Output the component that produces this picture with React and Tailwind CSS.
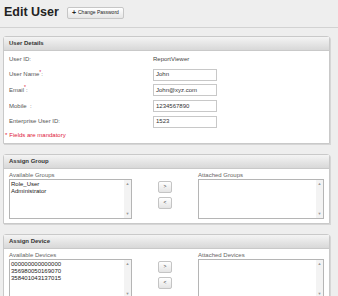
import React from 'react';

const users = [
  { label: 'User Name', req: true, value: 'John' },
  { label: 'Email', req: true, value: 'John@xyz.com' },
  { label: 'Mobile :', req: false, value: '1234567890' },
  { label: 'Enterprise User ID:', req: false, value: '1523' },
];

function Panel({ title, children, className = '' }) {
  return (
    <div className={`mx-[3px] w-[327px] rounded-t-[3px] border border-[#c9c9c9] bg-white shadow-[1px_1px_0_#d6d6d6] ${className}`}>
      <div className="flex h-[14px] items-center border-b border-[#c9c9c9] bg-gradient-to-b from-[#f4f4f4] to-[#d8d8d8] px-[5px] text-[6px] font-bold text-[#333]">
        {title}
      </div>
      {children}
    </div>
  );
}

function ListBox({ items }) {
  return (
    <div className="flex h-[40px] w-full shrink-0 border border-[#b5b5b5] bg-white">
      <div className="flex-1 px-[1px] pt-[1px] text-[6px] leading-[7px] text-[#222]">
        {items.map(i => <div key={i}>{i}</div>)}
      </div>
      <div className="flex w-[7px] flex-col items-center justify-between bg-[#f3f3f3] py-[2px] text-[4px] leading-[4px] text-[#999]">
        <span>▲</span>
        <span>▼</span>
      </div>
    </div>
  );
}

function MoveButton({ children }) {
  return (
    <div className="flex h-[12px] w-[14px] items-center justify-center rounded-[2px] border border-[#c4c4c4] bg-gradient-to-b from-white to-[#e4e4e4] text-[5px] text-[#333]">
      {children}
    </div>
  );
}

function Picker({ left, right, items }) {
  return (
    <div className="flex px-[5px] pt-[2px] pb-[4px]">
      <div className="flex w-[123px] flex-col">
        <div className="h-[8px] text-[6px] leading-[8px] text-[#666]">{left}</div>
        <ListBox items={items} />
      </div>
      <div className="flex w-[66px] flex-col items-center gap-[4px] pt-[10px]">
        <MoveButton>&gt;</MoveButton>
        <MoveButton>&lt;</MoveButton>
      </div>
      <div className="flex w-[126px] flex-col">
        <div className="h-[8px] text-[6px] leading-[8px] text-[#666]">{right}</div>
        <ListBox items={[]} />
      </div>
    </div>
  );
}

export default function App() {
  return (
    <div className="h-[296px] w-[338px] overflow-hidden bg-[#eeeeee] font-['Liberation_Sans',Arial,sans-serif]">
      <div className="flex h-[28px] items-center gap-[8px] border-b border-[#d2d2d2] px-[4px] pb-[2px]">
        <h1 className="text-[12.5px] font-bold text-[#222]">Edit User</h1>
        <button className="flex h-[12px] items-center gap-[2px] rounded-[2px] border border-[#c6c6c6] bg-gradient-to-b from-white to-[#e6e6e6] px-[4px] text-[5px] text-[#222]">
          <span className="text-[7px] font-bold leading-none">+</span>
          Change Password
        </button>
      </div>

      <Panel title="User Details" className="mt-[8px]">
        <div className="px-[5px] pt-[3px] text-[6px] text-[#555]">
          <div className="flex h-[11px] items-center">
            <span className="w-[144px]">User ID:</span>
            <span className="text-[#444]">ReportViewer</span>
          </div>
          {users.map(u => (
            <div key={u.label} className="mt-[3.7px] flex h-[12px] items-center">
              <span className="w-[144px] whitespace-pre">
                {u.label.replace(' :', '')}
                {u.req && <sup className="text-[5px] text-[#e0203a]">*</sup>}
                {u.req ? ':' : u.label.endsWith(' :') ? '  :' : ''}
              </span>
              <div className="flex h-[12px] w-[64px] items-center border border-[#c8c8c8] bg-white px-[2px] text-[#333]">
                {u.value}
              </div>
            </div>
          ))}
          <div className="flex h-[15px] items-center text-[#e0203a]">
            <span className="-ml-[4px] mr-[2px]">*</span>Fields are mandatory
          </div>
        </div>
      </Panel>

      <Panel title="Assign Group" className="mt-[10px]">
        <Picker left="Available Groups" right="Attached Groups" items={['Role_User', 'Administrator']} />
      </Panel>

      <Panel title="Assign Device" className="mt-[10px]">
        <Picker left="Available Devices" right="Attached Devices" items={['000000000000000', '356980050169070', '358401043137015']} />
      </Panel>
    </div>
  );
}
